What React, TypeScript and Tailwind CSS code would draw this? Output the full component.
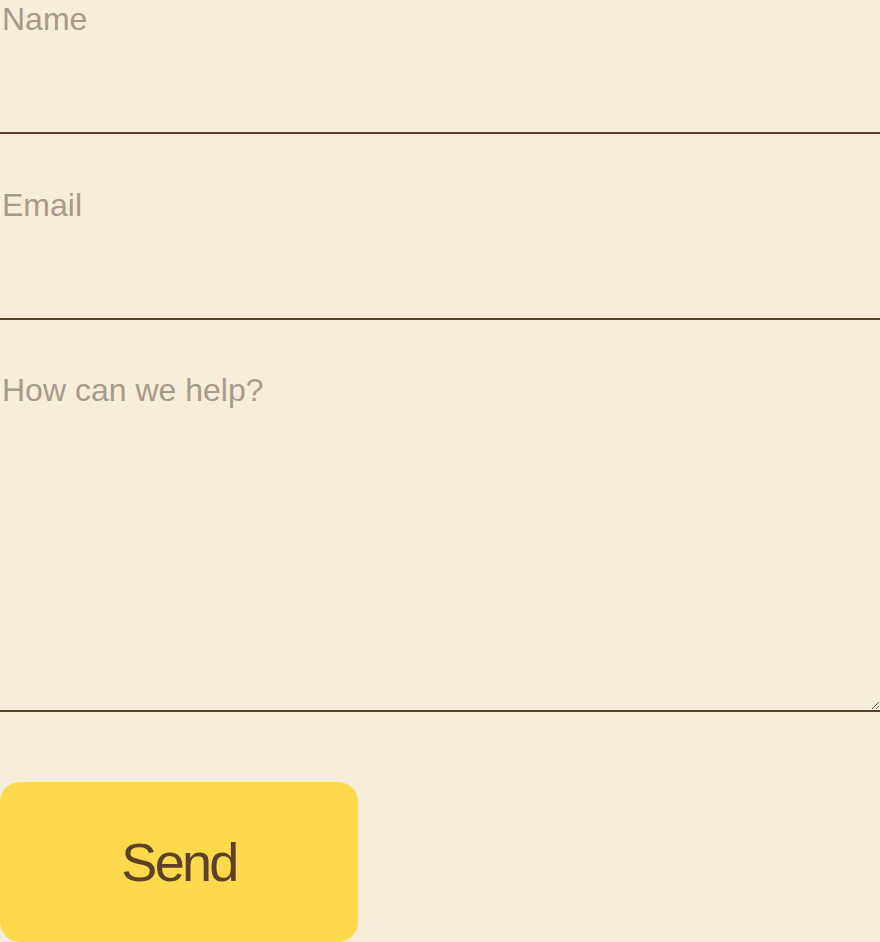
export default function App() {
  const field =
    "block w-full bg-transparent border-0 border-b-2 border-[#5c4128] px-[2px] text-[32px] text-[#5c4128] placeholder:text-[#a8998a] outline-none";
  return (
    <div
      className="min-h-[942px] w-full bg-[#f6edda]"
      style={{ fontFamily: '"Liberation Sans", Arial, sans-serif' }}
    >
      <form className="flex flex-col" onSubmit={(e) => e.preventDefault()}>
        <input
          type="text"
          placeholder="Name"
          className={`${field} h-[134px] pt-0 pb-[94px]`}
        />
        <input
          type="email"
          placeholder="Email"
          className={`${field} h-[186px] pt-[52px] pb-[94px]`}
        />
        <textarea
          placeholder="How can we help?"
          className={`${field} h-[392px] pt-[46px] leading-normal resize-y`}
        />
        <button
          type="submit"
          className="mt-[70px] flex h-[160px] w-[358px] items-center justify-center rounded-[20px] bg-[#ffd94c] text-[54px] tracking-[-0.05em] text-[#5c4128]"
        >
          Send
        </button>
      </form>
    </div>
  );
}
